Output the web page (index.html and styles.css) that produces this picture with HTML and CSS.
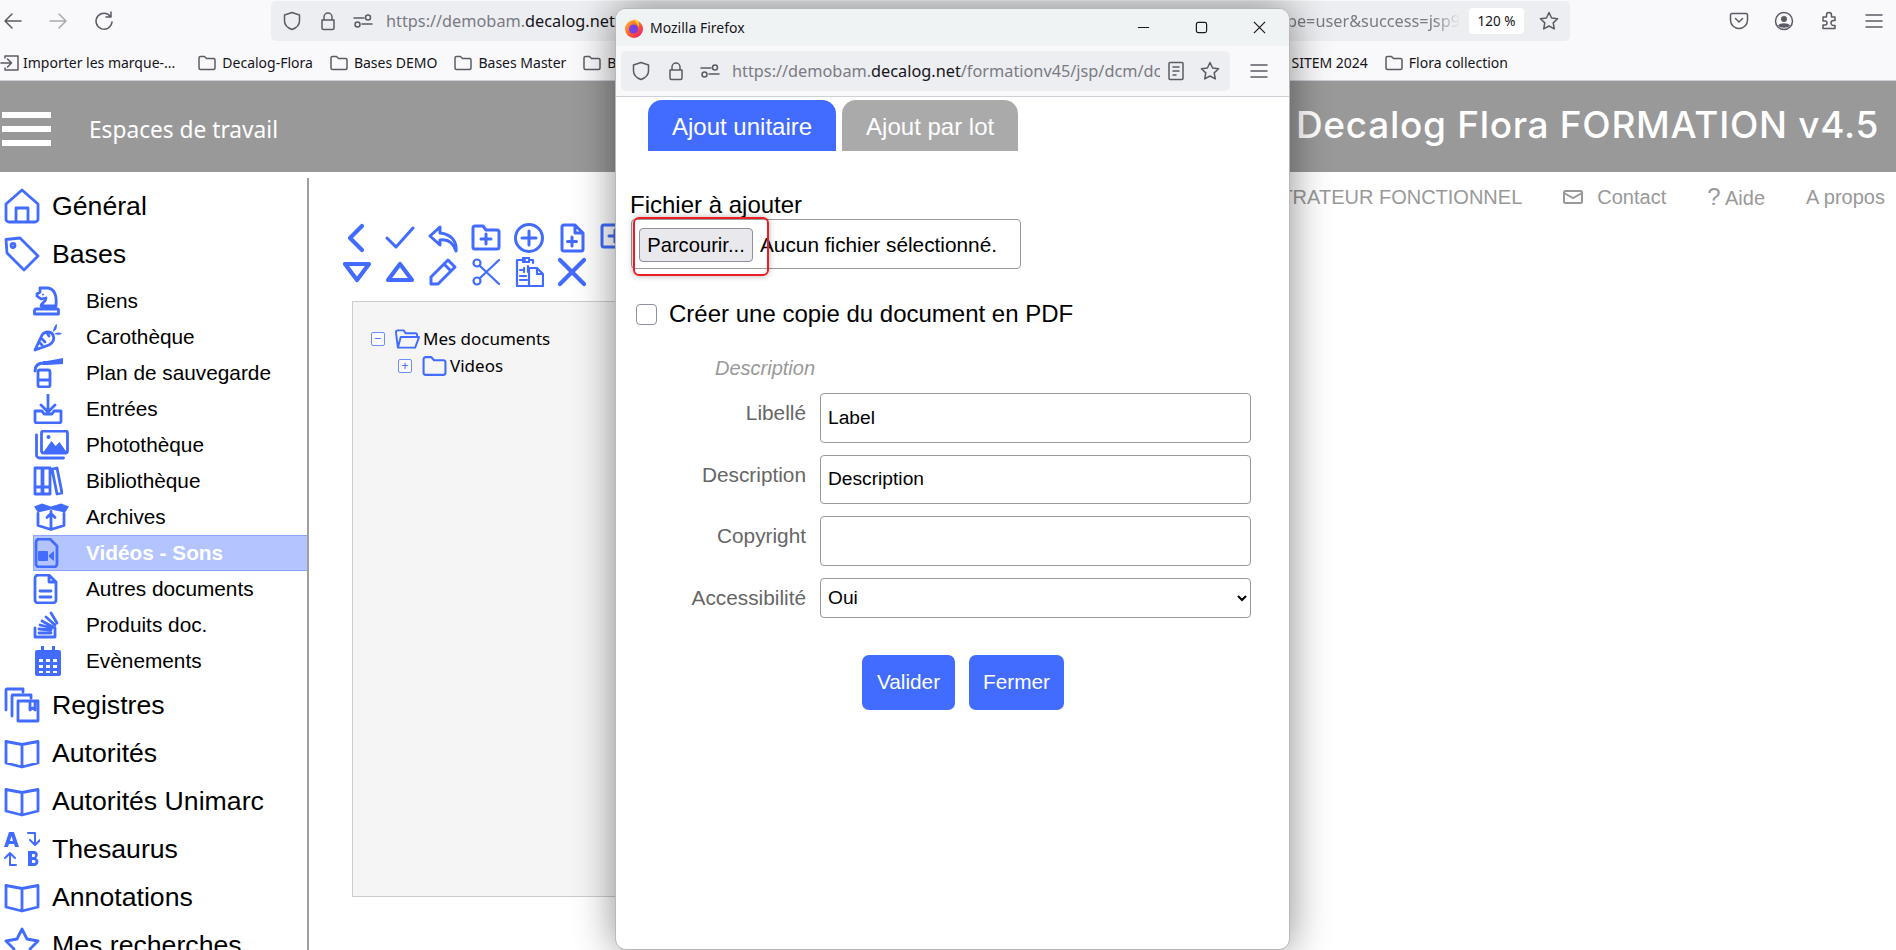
FILE: index.html
```html
<!DOCTYPE html>
<html lang="fr">
<head>
    <meta charset="UTF-8">
    <title>Decalog Flora FORMATION v4.5</title>
    <link rel="stylesheet" href="styles.css">
</head>
<body>
    <svg class="defs" width="0" height="0">
        <defs>
            <symbol id="book" viewBox="0 0 36 32"><path d="M2 4.500 18 7.500 34 4.500V26L18 30 2 26zM18 7.500V30" /></symbol>
            <symbol id="folder" viewBox="0 2 24 20"><path d="M1.500 5.500a2 2 0 0 1 2-2h5.500l2.500 3h9a2 2 0 0 1 2 2v10a2 2 0 0 1-2 2h-17a2 2 0 0 1-2-2z" /></symbol>
            <symbol id="ff-folder" viewBox="0 0 20 20"><path d="M2 5a1.500 1.500 0 0 1 1.500-1.500h4l2 2h7A1.500 1.500 0 0 1 18 7v8a1.500 1.500 0 0 1-1.500 1.500h-13A1.500 1.500 0 0 1 2 15z" /></symbol>
            <symbol id="ff-shield" viewBox="0 0 20 20"><path d="M10 1.500 17.500 4v6c0 4.500-3.500 7-7.500 8.500C6 17 2.500 14.500 2.500 10V4z" /></symbol>
            <symbol id="ff-lock" viewBox="0 0 20 20"><path d="M6 9V6a4 4 0 0 1 8 0v3M4 9h12v8a1.500 1.500 0 0 1-1.500 1.500h-9A1.500 1.500 0 0 1 4 17z" /></symbol>
            <symbol id="ff-perms" viewBox="0 0 20 20"><path d="M1 7h10M9 13h10" /><circle cx="15" cy="6.500" r="2.500" /><circle cx="4.500" cy="13.500" r="2.500" /></symbol>
            <symbol id="ff-star" viewBox="0 0 20 20"><path d="M10 1.500 12.600 7l6 .8-4.400 4.100 1.100 6L10 15l-5.300 2.900 1.100-6L1.400 7.800l6-.8z" /></symbol>
            <symbol id="ff-menu" viewBox="0 0 20 20"><path d="M2 4h16M2 10h16M2 16h16" /></symbol>
        </defs>
    </svg>

    <!-- Main browser window -->
    <div class="chrome">
        <div class="toolbar">
            <svg class="ff back" viewBox="0 0 20 20"><path d="M18 10H2M9 3l-7 7 7 7" /></svg>
            <svg class="ff forward" viewBox="0 0 20 20"><path d="M2 10h16M11 3l7 7-7 7" /></svg>
            <svg class="ff reload" viewBox="0 0 20 20"><path d="M16.500 5.500A8 8 0 1 0 18 11M17 1v5h-5" /></svg>
            <div class="urlbar">
                <svg class="ff"><use href="#ff-shield" /></svg>
                <svg class="ff lock"><use href="#ff-lock" /></svg>
                <svg class="ff perms"><use href="#ff-perms" /></svg>
                <span class="url">https://demobam.<b>decalog.net</b>/formationv45/jsp</span>
                <span class="url-tail">pe=user&amp;success=jsp9</span>
                <span class="zoom-badge">120 %</span>
                <svg class="ff star"><use href="#ff-star" /></svg>
            </div>
            <div class="toolbar-right">
                <svg class="ff" viewBox="0 0 20 20"><path d="M3 2.500h14a1.500 1.500 0 0 1 1.500 1.500v5a8.500 8.500 0 0 1-17 0V4A1.500 1.500 0 0 1 3 2.500zM6.500 7.500 10 11l3.500-3.500" /></svg>
                <svg class="ff" viewBox="0 0 20 20"><circle cx="10" cy="10" r="8.500" /><circle class="solid" cx="10" cy="8" r="3" /><path class="solid" d="M4 14.500c2-3 10-3 12 0-2 3-10 3-12 0z" /></svg>
                <svg class="ff" viewBox="0 0 20 20"><path d="M3 7h3.500V5a2.500 2.500 0 0 1 5 0v2H15v3.500h-1.500a2.500 2.500 0 0 0 0 5H15v3H3v-3.500h2a2 2 0 0 0 0-4H3z" transform="translate(1 -1)" /></svg>
                <svg class="ff"><use href="#ff-menu" /></svg>
            </div>
        </div>
        <div class="bookmarks">
            <span class="bookmark first"><svg class="ff" viewBox="0 0 20 20"><path d="M1 10h10M7.500 6l4 4-4 4M5 5V3h13v14H5v-2" /></svg>Importer les marque-...</span>
            <span class="bookmark"><svg class="ff"><use href="#ff-folder" /></svg>Decalog-Flora</span>
            <span class="bookmark"><svg class="ff"><use href="#ff-folder" /></svg>Bases DEMO</span>
            <span class="bookmark"><svg class="ff"><use href="#ff-folder" /></svg>Bases Master</span>
            <span class="bookmark"><svg class="ff"><use href="#ff-folder" /></svg>B</span>
            <span class="bookmark push">SITEM 2024</span>
            <span class="bookmark"><svg class="ff"><use href="#ff-folder" /></svg>Flora collection</span>
        </div>
    </div>

    <header class="app-header">
        <div class="burger"><i></i><i></i><i></i></div>
        <div class="workspaces">Espaces de travail</div>
        <div class="brand">Decalog Flora FORMATION v4.5</div>
    </header>

    <div class="app-body">
        <nav class="sidebar">
            <a class="main-item">
                <svg class="ico" viewBox="0 0 36 36"><path d="M2 16 18 2 34 16V31a3 3 0 0 1-3 3H5a3 3 0 0 1-3-3zM12 34V20h12v14" /></svg>Général
            </a>
            <a class="main-item">
                <svg class="ico" viewBox="0 0 36 36"><path d="M2 3.500 16 2 34 20 20 34 3 17z" /><circle cx="9" cy="9.500" r="2" /></svg>Bases
            </a>
            <ul class="sub-list">
                <li>
                    <svg class="ico" viewBox="0 0 30 30"><path d="M7 2h8c6 1 9 7 8 18H8c0-3 5-4 5-8l-5 1-4-3V8l3-2zM3 23h21a1.500 1.500 0 0 1 1.500 1.500V28H1.500v-3.500A1.500 1.500 0 0 1 3 23z" /><circle class="solid" cx="10" cy="8.500" r="1" /></svg>Biens
                </li>
                <li>
                    <svg class="ico" viewBox="0 0 30 30"><path d="M2 28 9 13c3-4 9-4 11 0s0 8-4 10zM9 17l3 3M14 11l2 3M9 23l-2-2" /><path class="solid" d="M20 10c0-4 2-7 4-8 0 3 0 6-4 8zM21 12c3-2 6-2 8 0-3 1-5 1-8 0z" /></svg>Carothèque
                </li>
                <li>
                    <svg class="ico" viewBox="0 0 30 30"><path d="M7 12h8a2 2 0 0 1 2 2v13a2 2 0 0 1-2 2H7a2 2 0 0 1-2-2V14a2 2 0 0 1 2-2zM5 22h12M2 13c0-5 3-8 9-8" /><path class="solid" d="M10 3h4L30 0v6L14 7h-4z" /></svg>Plan de sauvegarde
                </li>
                <li>
                    <svg class="ico" viewBox="0 0 30 30"><path d="M15 1v16M8 11l7 7 7-7M9 17H2v10a2 2 0 0 0 2 2h22a2 2 0 0 0 2-2V17h-7l-2 3h-8z" /></svg>Entrées
                </li>
                <li>
                    <svg class="ico wide" viewBox="0 0 34 30"><path d="M9 1h22a2 2 0 0 1 2 2v18a2 2 0 0 1-2 2H9a2 2 0 0 1-2-2V3a2 2 0 0 1 2-2z" /><path class="solid" d="M9 22 17 11l4 5 4-4 7 10z" /><circle class="solid" cx="14" cy="7" r="2" /><path d="M2 5v20a3 3 0 0 0 3 3h24" /></svg>Photothèque
                </li>
                <li>
                    <svg class="ico" viewBox="0 0 30 30"><path d="M2 2h7v26H2zM10 2h7v26h-7zM19 3l5-1 5 25-5 1zM2 21h7M10 21h7" /></svg>Bibliothèque
                </li>
                <li>
                    <svg class="ico wide" viewBox="0 0 37 27"><path d="M5 10v12l13 4 13-4V10M18 8v18M14 14l4-4 4 4" /><path class="solid" d="M1 3 9 0l9 3 10-3 8 3-4 6-14-3-13 3z" /></svg>Archives
                </li>
                <li class="active">
                    <svg class="ico" viewBox="0 0 30 30"><path d="M5 1h11l7 7v18a3 3 0 0 1-3 3H5a3 3 0 0 1-3-3V4a3 3 0 0 1 3-3z" /><path class="solid" d="M5 13h8a1 1 0 0 1 1 1v8a1 1 0 0 1-1 1H5a1 1 0 0 1-1-1v-8a1 1 0 0 1 1-1zM15 17l5-4v10l-5-4z" /></svg>Vidéos - Sons
                </li>
                <li>
                    <svg class="ico" viewBox="0 0 30 30"><path d="M5 1h11l7 7v18a3 3 0 0 1-3 3H5a3 3 0 0 1-3-3V4a3 3 0 0 1 3-3zM16 1v7h7M7 17h11M7 23h11" /></svg>Autres documents
                </li>
                <li>
                    <svg class="ico" viewBox="0 0 30 30"><path d="M2 18v9h20v-9M6 23h12M6 19l12 1M7 15l12 3M9 11l11 6M13 7l9 8M18 3l6 10" /></svg>Produits doc.
                </li>
                <li>
                    <svg class="ico" viewBox="0 0 30 30"><path class="solid" d="M4 4h22a2 2 0 0 1 2 2v22a2 2 0 0 1-2 2H4a2 2 0 0 1-2-2V6a2 2 0 0 1 2-2zM8 0h3v5H8zM19 0h3v5h-3z" /><path class="cut" d="M6 13h4v3H6zM13 13h4v3h-4zM20 13h4v3h-4zM6 19h4v3H6zM13 19h4v3h-4zM20 19h4v3h-4zM6 25h4v2H6zM13 25h4v2h-4zM20 25h4v2h-4z" /></svg>Evènements
                </li>
            </ul>
            <a class="main-item">
                <svg class="ico" viewBox="0 0 36 36"><path d="M2 23V3a1 1 0 0 1 1-1h16v3M8 29V9a1 1 0 0 1 1-1h18v3M14 34V14h20v20zM26 14v9l2.500-2 2.500 2v-9" /></svg>Registres
            </a>
            <a class="main-item"><svg class="ico"><use href="#book" /></svg>Autorités</a>
            <a class="main-item"><svg class="ico"><use href="#book" /></svg>Autorités Unimarc</a>
            <a class="main-item">
                <svg class="ico" viewBox="0 0 36 36"><path class="solid" d="M5 1h5l5 15h-4l-1-3H5l-1 3H0zM6 10h3L7.500 5zM24 20h6c4 0 5 5 2 7 4 2 3 8-2 8h-6zM28 23v3h2c1.500 0 1.500-3 0-3zM28 29v3h2c2 0 2-3 0-3z" /><path class="thin" d="M24 2h7v11M26 9l5 5 5-5M12 34H6V22M1 27l5-5 5 5" /></svg>Thesaurus
            </a>
            <a class="main-item"><svg class="ico"><use href="#book" /></svg>Annotations</a>
            <a class="main-item">
                <svg class="ico" viewBox="0 0 36 36"><path d="M18 2 23 12 34 14 26 22 28 34 18 28 8 34 10 22 2 14 13 12z" /></svg>Mes recherches
            </a>
        </nav>

        <main class="workspace">
            <div class="top-nav">
                <span>ADMINISTRATEUR FONCTIONNEL</span>
                <span class="contact">
                    <svg viewBox="0 0 20 14"><rect x="1" y="1" width="18" height="12" rx="1.500" /><path d="M1 3l9 5 9-5" /></svg>Contact
                </span>
                <span class="help"><em>?</em> Aide</span>
                <span>A propos</span>
            </div>

            <div class="actions">
                <div class="action-row">
                    <svg class="act heavy" viewBox="0 0 30 30"><path d="M20 3 8 15l12 12" /></svg>
                    <svg class="act" viewBox="0 0 30 30"><path d="M2 15l9 9L28 5" /></svg>
                    <svg class="act" viewBox="0 0 30 30"><path d="M12 4 2 13l10 9v-5c7-1 13 2 16 11 1-10-5-17-16-18z" /></svg>
                    <svg class="act" viewBox="0 0 30 30"><path d="M2 5a2 2 0 0 1 2-2h8l3 4h11a2 2 0 0 1 2 2v15a2 2 0 0 1-2 2H4a2 2 0 0 1-2-2zM15 11v10M10 16h10" /></svg>
                    <svg class="act" viewBox="0 0 30 30"><circle cx="15" cy="15" r="13.500" /><path d="M15 8v14M8 15h14" /></svg>
                    <svg class="act" viewBox="0 0 30 30"><path d="M7 2h11l8 8v16a2 2 0 0 1-2 2H7a2 2 0 0 1-2-2V4a2 2 0 0 1 2-2zM18 2v8h8M15 14v9M10.500 18.500h9" /></svg>
                    <svg class="act" viewBox="0 0 30 30"><path d="M4 2h22a2 2 0 0 1 2 2v18a2 2 0 0 1-2 2H4a2 2 0 0 1-2-2V4a2 2 0 0 1 2-2zM15 7v12M9 13h12" /></svg>
                </div>
                <div class="action-row">
                    <svg class="act heavy" viewBox="0 0 30 30"><path d="M3 7h24L15 23z" /></svg>
                    <svg class="act heavy" viewBox="0 0 30 30"><path d="M3 23h24L15 7z" /></svg>
                    <svg class="act" viewBox="0 0 30 30"><path d="M3 27v-7L20 3l7 7-17 17zM16 7l7 7" /></svg>
                    <svg class="act thin" viewBox="0 0 30 30"><circle cx="6" cy="6" r="3.500" /><circle cx="6" cy="24" r="3.500" /><path d="M9 9l19 18M9 21 28 3" /></svg>
                    <svg class="act thin" viewBox="0 0 30 30"><path d="M11 3H3v26h11M19 6V3h-3M9 1h6v4H9zM6 13h2M6 23h7M6 19h6M10 15V11M14 15V9" /><path d="M15 11h8l6 6v12H15zM23 11v6h6" /></svg>
                    <svg class="act heavy" viewBox="0 0 30 30"><path d="M3 3l24 24M27 3 3 27" /></svg>
                </div>
            </div>

            <section class="tree">
                <div class="tree-node">
                    <span class="toggle">−</span>
                    <svg class="tree-folder" viewBox="0 0 26 22"><path d="M3 20 1 4a2 2 0 0 1 2-2h6l2 3h10a2 2 0 0 1 2 2v2M3 20h18l4-11H6z" /></svg>
                    Mes documents
                </div>
                <div class="tree-node child">
                    <span class="toggle">+</span>
                    <svg class="tree-folder"><use href="#folder" /></svg>
                    Videos
                </div>
            </section>
        </main>
    </div>

    <!-- Popup window -->
    <div class="popup">
        <div class="popup-title">
            <svg class="ff-logo" viewBox="0 0 20 20">
                <defs>
                    <linearGradient id="ffg" x1="0" y1="0" x2="1" y2="1">
                        <stop offset="0" stop-color="#ffbd2e" />
                        <stop offset=".55" stop-color="#ff5634" />
                        <stop offset="1" stop-color="#e31587" />
                    </linearGradient>
                </defs>
                <circle cx="10" cy="11" r="9" fill="url(#ffg)" />
                <path d="M10 1c4 1 6 4 5 8-2-2-3-5-5-8z" fill="#ffd02e" />
                <circle cx="9.500" cy="11" r="4.500" fill="#7542e5" />
            </svg>
            <span class="popup-name">Mozilla Firefox</span>
            <div class="win-controls">
                <svg viewBox="0 0 14 14"><path d="M1 7h12" /></svg>
                <svg viewBox="0 0 14 14"><rect x="1.500" y="1.500" width="11" height="11" rx="2" /></svg>
                <svg viewBox="0 0 14 14"><path d="M1 1l12 12M13 1 1 13" /></svg>
            </div>
        </div>
        <div class="popup-toolbar">
            <div class="urlbar popup-url">
                <svg class="ff"><use href="#ff-shield" /></svg>
                <svg class="ff lock"><use href="#ff-lock" /></svg>
                <svg class="ff perms"><use href="#ff-perms" /></svg>
                <span class="url">https://demobam.<b>decalog.net</b>/formationv45/jsp/dcm/dc</span>
                <svg class="ff reader" viewBox="0 0 20 20"><path d="M4 1.500h12a1 1 0 0 1 1 1v15a1 1 0 0 1-1 1H4a1 1 0 0 1-1-1v-15a1 1 0 0 1 1-1zM7 6h6M7 10h6M7 14h3" /></svg>
                <svg class="ff star"><use href="#ff-star" /></svg>
            </div>
            <svg class="ff popup-menu"><use href="#ff-menu" /></svg>
        </div>
        <div class="popup-content">
            <div class="tabs">
                <button class="tab active" type="button">Ajout unitaire</button>
                <button class="tab" type="button">Ajout par lot</button>
            </div>

            <div class="file-title">Fichier à ajouter</div>
            <div class="file-box">
                <button class="browse" type="button">Parcourir...</button>
                <span>Aucun fichier sélectionné.</span>
                <div class="highlight"></div>
            </div>

            <label class="pdf-check">
                <input type="checkbox">
                Créer une copie du document en PDF
            </label>

            <div class="legend">Description</div>
            <form class="fields">
                <label class="field-label">Libellé</label>
                <input class="field" type="text" value="Label">
                <label class="field-label">Description</label>
                <input class="field" type="text" value="Description">
                <label class="field-label">Copyright</label>
                <input class="field" type="text">
                <label class="field-label">Accessibilité</label>
                <select class="field select">
                    <option>Oui</option>
                    <option>Non</option>
                </select>
            </form>

            <div class="form-buttons">
                <button class="primary valider" type="button">Valider</button>
                <button class="primary fermer" type="button">Fermer</button>
            </div>
        </div>
    </div>
</body>
</html>
```

FILE: styles.css
```css
html, body {
    margin: 0;
    padding: 0;
    height: 950px;
    overflow: hidden;
}

body {
    position: relative;
    font-family: "Liberation Sans", Arial, sans-serif;
    background-color: #ffffff;
    color: #000000;
}

.defs {
    position: absolute;
}

/* Browser chrome */
.chrome {
    height: 81px;
    background-color: #f9f9fb;
    border-bottom: 1px solid #cfcfd8;
    box-sizing: border-box;
    font-family: "Noto Sans", sans-serif;
}

.toolbar {
    height: 45px;
    display: flex;
    align-items: flex-start;
}

.ff {
    width: 20px;
    height: 20px;
    flex: none;
    fill: none;
    stroke: #5b5b66;
    stroke-width: 1.5;
    stroke-linejoin: round;
    stroke-linecap: round;
}

.ff .solid {
    fill: #5b5b66;
    stroke: none;
}

.back, .forward, .reload {
    margin-top: 11px;
}

.back {
    margin-left: 3px;
}

.forward {
    margin-left: 25px;
    opacity: .5;
}

.reload {
    margin-left: 26px;
}

.urlbar {
    display: flex;
    align-items: center;
    height: 40px;
    background-color: #edeef1;
    border-radius: 5px;
}

.toolbar .urlbar {
    width: 1299px;
    margin: 1px 0 0 157px;
    padding: 0 11px;
    box-sizing: border-box;
}

.lock {
    margin-left: 16px;
}

.perms {
    margin-left: 15px;
}

.url {
    margin-left: 13px;
    font-size: 16.300px;
    color: #7a7a84;
    white-space: nowrap;
    overflow: hidden;
}

.url b {
    font-weight: 400;
    color: #15141a;
}

.url-tail {
    margin-left: auto;
    font-size: 16.300px;
    color: #7a7a84;
    white-space: nowrap;
    mask-image: linear-gradient(to right, #000 85%, transparent);
}

.zoom-badge {
    width: 55px;
    height: 26px;
    line-height: 26px;
    margin-left: 9px;
    text-align: center;
    font-size: 13.500px;
    color: #15141a;
    background-color: #ffffff;
    border-radius: 4px;
}

.toolbar .star {
    margin-left: 15px;
}

.toolbar-right {
    display: flex;
    gap: 25px;
    margin: 11px 0 0 159px;
}

.bookmarks {
    height: 35px;
    display: flex;
    align-items: center;
    padding: 0 388px 0 0;
    font-size: 14px;
    color: #15141a;
    white-space: nowrap;
}

.bookmark {
    display: flex;
    align-items: center;
    gap: 5px;
    margin-right: 16px;
}

.bookmark.first {
    gap: 3px;
    margin-right: 22px;
}

.bookmark.push {
    margin-left: auto;
}

.bookmark:last-child {
    margin-right: 0;
}

/* App header */
.app-header {
    height: 91px;
    display: flex;
    align-items: center;
    color: #ffffff;
    background-color: #999999;
    padding-right: 17px;
}

.burger {
    width: 49px;
    margin: 4px 0 0 2px;
    display: flex;
    flex-direction: column;
    gap: 8px;
}

.burger i {
    height: 6px;
    background-color: #ffffff;
}

.workspaces {
    margin: 6px 0 0 38px;
    font-family: "Noto Sans", sans-serif;
    font-size: 22.700px;
}

.brand {
    margin-left: auto;
    margin-top: -4px;
    font-family: Inter, sans-serif;
    font-size: 37px;
    font-weight: 500;
    letter-spacing: .7px;
}

/* Body */
.app-body {
    display: flex;
    height: 697px;
}

.sidebar {
    width: 307px;
    flex: none;
    height: 800px;
    margin-top: 6px;
    padding-top: 4px;
    border-right: 2px solid #a0a0a0;
}

.main-item {
    height: 48px;
    display: flex;
    align-items: center;
    padding-left: 4px;
    font-size: 26.670px;
}

.main-item .ico {
    width: 36px;
    height: 36px;
    margin-right: 12px;
}

.ico {
    flex: none;
    fill: none;
    stroke: #426bff;
    stroke-width: 2.800;
    stroke-linejoin: round;
    stroke-linecap: round;
}

.ico .solid {
    fill: #426bff;
    stroke: none;
}

.ico .cut {
    fill: #ffffff;
    stroke: none;
}

.ico .thin {
    stroke-width: 2;
}

.sub-list {
    list-style: none;
    margin: 5px 0 2px 33px;
    padding: 0;
}

.sub-list li {
    height: 36px;
    display: flex;
    align-items: center;
    font-size: 20.800px;
    box-sizing: border-box;
}

.sub-list .ico {
    width: 30px;
    height: 30px;
    margin-right: 23px;
}

.sub-list .ico.wide {
    width: 37px;
    margin-right: 16px;
}

.sub-list li.active {
    color: #ffffff;
    font-weight: 700;
    background-color: #b3c4ff;
    border: 1px solid #8fa6ff;
    border-right: 0;
}

.sub-list li.active .ico {
    margin-right: 22px;
}

/* Main column */
.workspace {
    flex: 1;
    min-width: 0;
    display: flex;
    flex-direction: column;
}

.top-nav {
    height: 50px;
    flex: none;
    display: flex;
    align-items: center;
    justify-content: flex-end;
    gap: 41px;
    padding: 0 11px 0 0;
    box-sizing: border-box;
    font-size: 20px;
    color: #999999;
    white-space: nowrap;
}

.contact {
    display: flex;
    align-items: center;
    gap: 14px;
}

.contact svg {
    width: 20px;
    height: 14px;
    fill: none;
    stroke: #999999;
    stroke-width: 2;
}

.help em {
    font-style: normal;
    font-size: 24px;
}

.actions {
    margin: 1px 0 0 33px;
    display: flex;
    flex-direction: column;
    gap: 4px;
    height: 78px;
    flex: none;
}

.action-row {
    display: flex;
    gap: 13px;
}

.act {
    width: 30px;
    height: 30px;
    flex: none;
    fill: none;
    stroke: #426bff;
    stroke-width: 3;
    stroke-linejoin: round;
    stroke-linecap: round;
}

.act.heavy {
    stroke-width: 4.200;
}

.act.thin {
    stroke-width: 2.200;
}

.tree {
    width: 900px;
    height: 596px;
    flex: none;
    margin-left: 43px;
    padding: 23px 0 0 18px;
    box-sizing: border-box;
    background-color: #f5f5f5;
    border: 1px solid #cccccc;
    font-family: "Noto Sans", sans-serif;
    font-size: 17px;
}

.tree-node {
    height: 27px;
    display: flex;
    align-items: center;
}

.tree-node.child {
    padding-left: 27px;
}

.toggle {
    width: 12px;
    height: 12px;
    line-height: 11px;
    text-align: center;
    font-size: 12px;
    color: #426bff;
    background-color: #fafaff;
    border: 1px solid #6f8dff;
    border-radius: 2px;
}

.tree-folder {
    width: 25px;
    height: 22px;
    margin: 0 3px 0 10px;
    fill: none;
    stroke: #426bff;
    stroke-width: 2;
    stroke-linejoin: round;
}

/* Popup window */
.popup {
    position: absolute;
    left: 615px;
    top: 8px;
    width: 675px;
    height: 942px;
    box-sizing: border-box;
    display: flex;
    flex-direction: column;
    background-color: #ffffff;
    border: 1px solid #b8b8b8;
    border-radius: 11px;
    box-shadow: 0 0 40px rgba(0, 0, 0, .45);
    overflow: hidden;
}

.popup-title {
    height: 37px;
    flex: none;
    display: flex;
    align-items: center;
    background-color: #f0f3f4;
    padding-left: 8px;
}

.ff-logo {
    width: 20px;
    height: 20px;
}

.popup-name {
    margin-left: 6px;
    font-family: "Noto Sans", sans-serif;
    font-size: 14px;
    color: #15141a;
}

.win-controls {
    margin-left: auto;
    margin-right: 23px;
    display: flex;
    gap: 45px;
}

.win-controls svg {
    width: 13px;
    height: 13px;
    fill: none;
    stroke: #1a1a1a;
    stroke-width: 1.300;
}

.popup-toolbar {
    height: 50px;
    flex: none;
    display: flex;
    align-items: center;
    background-color: #f9f9fb;
    border-bottom: 1px solid #cfcfd8;
    padding-left: 5px;
    font-family: "Noto Sans", sans-serif;
}

.popup-url {
    width: 609px;
    padding-left: 10px;
    box-sizing: border-box;
}

.popup-url .lock {
    margin-left: 15px;
}

.popup-url .perms {
    margin-left: 14px;
}

.popup-url .url {
    width: 428px;
    flex: none;
    margin-left: 12px;
}

.reader {
    margin-left: 6px;
}

.popup-url .star {
    margin-left: 14px;
}

.popup-menu {
    margin-left: 19px;
}

.popup-content {
    flex: 1;
}

.tabs {
    display: flex;
    gap: 6px;
    padding: 3px 0 0 32px;
}

.tab {
    height: 51px;
    padding: 2px 24px 0;
    border: none;
    border-radius: 14px 14px 0 0;
    font-family: "Liberation Sans", Arial, sans-serif;
    font-size: 24px;
    color: #ffffff;
    background-color: #aaaaaa;
}

.tab.active {
    background-color: #426bff;
}

.file-title {
    margin: 40px 0 0 14px;
    font-size: 24px;
    line-height: 28px;
}

.file-box {
    position: relative;
    width: 390px;
    height: 50px;
    margin-left: 15px;
    box-sizing: border-box;
    display: flex;
    align-items: center;
    gap: 7px;
    padding: 2px 0 0 7px;
    border: 1px solid #999999;
    border-radius: 4px;
    font-size: 20.800px;
    white-space: nowrap;
}

.browse {
    width: 114px;
    height: 34px;
    padding: 0;
    font-family: "Liberation Sans", Arial, sans-serif;
    font-size: 20.200px;
    color: #000000;
    background-color: #e9e9ed;
    border: 1px solid #8f8f9d;
    border-radius: 4px;
}

.highlight {
    position: absolute;
    left: 1px;
    top: -3px;
    width: 136px;
    height: 59px;
    box-sizing: border-box;
    border: 2px solid #ee1c25;
    border-radius: 6px;
    box-shadow: 0 0 6px rgba(0, 0, 0, .3);
}

.pdf-check {
    display: flex;
    align-items: center;
    gap: 12px;
    height: 30px;
    margin: 30px 0 0 20px;
    font-size: 24px;
}

.pdf-check input {
    appearance: none;
    width: 21px;
    height: 21px;
    margin: 0;
    background-color: #ffffff;
    border: 1px solid #8f8f9d;
    border-radius: 4px;
}

.legend {
    margin: 27px 0 0 99px;
    font-size: 20px;
    line-height: 24px;
    font-style: italic;
    color: #999999;
}

.fields {
    display: grid;
    grid-template-columns: 190px 431px;
    grid-template-rows: 49.500px 49.500px 49.500px 40px;
    column-gap: 14px;
    row-gap: 12px;
    margin-top: 13px;
}

.field-label {
    padding-top: 8px;
    line-height: 24px;
    text-align: right;
    font-size: 20.800px;
    color: #666666;
}

.field {
    box-sizing: border-box;
    width: 100%;
    height: 100%;
    padding: 0 7px;
    font-family: "Liberation Sans", Arial, sans-serif;
    font-size: 19.200px;
    color: #000000;
    background-color: #ffffff;
    border: 1px solid #999999;
    border-radius: 4px;
}

.select {
    padding: 0 3px;
}

.form-buttons {
    display: flex;
    gap: 14px;
    margin-top: 37px;
    padding-left: 246px;
}

.primary {
    height: 55px;
    padding: 0;
    border: none;
    border-radius: 7px;
    font-family: "Liberation Sans", Arial, sans-serif;
    font-size: 20.800px;
    color: #ffffff;
    background-color: #426bff;
}

.valider {
    width: 93px;
}

.fermer {
    width: 95px;
}
```
